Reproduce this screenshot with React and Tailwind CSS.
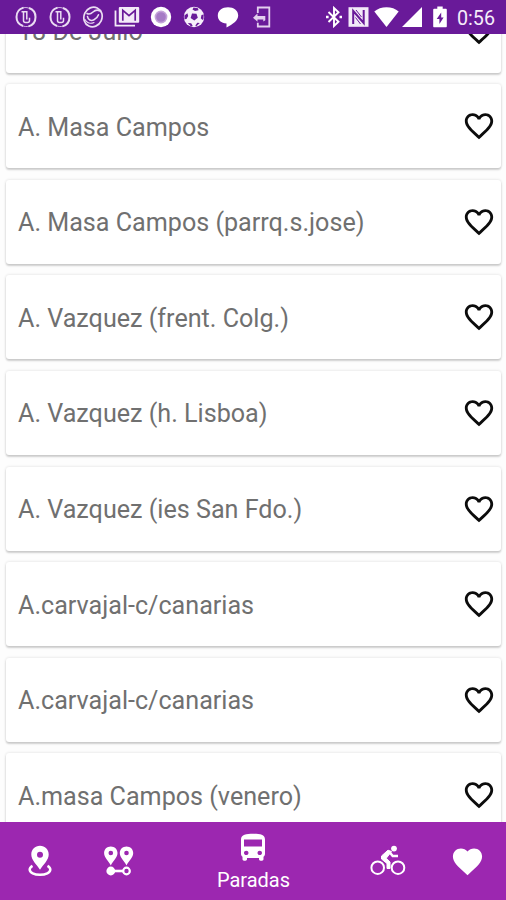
const STOPS = [
  "18 De Julio",
  "A. Masa Campos",
  "A. Masa Campos (parrq.s.jose)",
  "A. Vazquez (frent. Colg.)",
  "A. Vazquez (h. Lisboa)",
  "A. Vazquez (ies San Fdo.)",
  "A.carvajal-c/canarias",
  "A.carvajal-c/canarias",
  "A.masa Campos (venero)"
];

const HEART = "M12 21.35l-1.45-1.32C5.4 15.36 2 12.28 2 8.5 2 5.42 4.42 3 7.5 3c1.74 0 3.41.81 4.5 2.09C13.09 3.81 14.76 3 16.5 3 19.58 3 22 5.42 22 8.5c0 3.78-3.4 6.86-8.55 11.54L12 21.35z";
const HEART_BORDER = "M16.5 3c-1.74 0-3.41.81-4.5 2.09C10.91 3.81 9.24 3 7.5 3 4.42 3 2 5.42 2 8.5c0 3.78 3.4 6.86 8.55 11.54L12 21.35l1.45-1.32C18.6 15.36 22 12.28 22 8.5 22 5.42 19.58 3 16.5 3zm-4.4 15.55l-.1.1-.1-.1C7.14 14.24 4 11.39 4 8.5 4 6.5 5.5 5 7.5 5c1.54 0 3.04.99 3.57 2.36h1.87C13.46 5.99 14.96 5 16.5 5c2 0 3.5 1.5 3.5 3.5 0 2.89-3.14 5.74-7.9 10.05z";

function PhoneRing() {
  return (
    <svg viewBox="0 0 22 22" className="h-[22px] w-[22px]" fill="none" stroke="#eadcf2">
      <path d="M8.5 1.600C4.300 2.800 1.500 6.500 1.500 11s2.800 7.700 6.500 9M13.500 20.400c4.200-1.200 7-4.900 7-9.400S17.700 3.300 14 2" strokeWidth="2" />
      <path d="M7 2.200c2.500-1 5.500-.9 8 .4M7 19.600c2.500 1.100 5 1.200 7.500.5" strokeWidth=".8" />
      <path d="M6.500 5.800h5.300v7.700M8.500 6v8.500c0 1.300.7 2 2 2h2c1.300 0 2-.8 2-2v-2.700" strokeWidth="1.500" />
    </svg>
  );
}

function Swirl() {
  return (
    <svg viewBox="0 0 22 22" className="h-[22px] w-[22px]" fill="none" stroke="#eadcf2" strokeLinecap="round">
      <ellipse cx="11" cy="11" rx="9" ry="10" strokeWidth="1.7" transform="rotate(25 11 11)" />
      <path d="M5 7.500c1.800.9 4 .4 6-1.500 2-1.800 4.500-2.300 6.500-1.200" strokeWidth="1.600" />
      <path d="M5.500 10.500c.5 3.500 3.500 4.800 6.500 3.300 2.300-1.100 3.800-3 4.500-5" strokeWidth="1.600" />
      <path d="M3 13.500c2 3.500 5.500 4.500 9 3" strokeWidth="1.100" />
    </svg>
  );
}

function MailStack() {
  return (
    <svg viewBox="0 0 26 22" className="h-[22px] w-[26px]" fill="none" stroke="#f3eaf8">
      <path d="M1.500 4.500v15.200H21" strokeWidth="1.800" />
      <rect x="4.800" y="1" width="20.400" height="15.700" rx="1" fill="#f3eaf8" stroke="none" />
      <path d="M8.800 14.800V4.400l6.200 5.300 6.200-5.300v10.400" stroke="#691a99" strokeWidth="1.700" />
    </svg>
  );
}

function Record() {
  return (
    <svg viewBox="0 0 22 22" className="h-[22px] w-[22px]">
      <circle cx="11" cy="11" r="10.2" fill="#fff" />
      <circle cx="11" cy="11" r="6.400" fill="#c4a3da" />
      <circle cx="11" cy="11" r="4.800" fill="#a67bc6" />
    </svg>
  );
}

function Ball() {
  return (
    <svg viewBox="0 0 22 22" className="h-[22px] w-[22px]">
      <circle cx="11" cy="11" r="10.200" fill="#f6effa" />
      <g fill="#691a99">
        <path d="M9 7.500l4.500.3 1.300 4-3.500 2.700-3.700-2.500z" />
        <path d="M10.500 1.500l4.500.8.5 2-3.500.7-2.500-1.500z" />
        <path d="M1.400 9.500l3-2.200.8 2.700-1.700 3-2 .2zM20.700 8.500l-2.200.5-.7 3.200 1.700 1.800 1-1.300zM4.800 17l3.400.3 1.500 2.500-1.700.6zM16.800 17l-2.500-.3-2 2.800 1 .8z" />
      </g>
    </svg>
  );
}

function Bubble() {
  return (
    <svg viewBox="0 0 22 22" className="h-[22px] w-[22px]" fill="#fff">
      <path d="M11 1.200c5.800 0 10.200 3.300 10.200 8.200 0 5-5.400 8.800-11.700 12v-3.900C4.200 17.200.8 14 .8 9.400.8 4.500 5.200 1.200 11 1.200z" />
    </svg>
  );
}

function Exit() {
  return (
    <svg viewBox="0 0 20 22" className="h-[22px] w-[20px]" fill="none" stroke="#e3d0ee" strokeWidth="1.800">
      <path d="M5.800 7V1.500h11.500v19H5.800v-3.700" />
      <path d="M5.500 7.500v2.600h7.800v4.200l-2 1.200v-2H5.500v2.300L1 11.700z" fill="#e3d0ee" stroke="none" />
    </svg>
  );
}

function StatusBar() {
  return (
    <header className="flex h-[34px] shrink-0 items-center justify-between bg-[#691a99] pl-[9px] pr-[11px]">
      <div className="grid grid-cols-[repeat(8,33.700px)] justify-items-center">
        <PhoneRing />
        <PhoneRing />
        <Swirl />
        <MailStack />
        <Record />
        <Ball />
        <Bubble />
        <Exit />
      </div>
      <div className="flex items-center">
        <svg viewBox="0 0 18 22" className="mr-[5px] h-[22px] w-[18px]" fill="none" stroke="#fff" strokeWidth="1.900">
          <path d="M3.500 6l10 9.700L9 20V2l4.500 4.300-10 9.700" />
          <path d="M1 11h2.600M14.500 11H17" strokeWidth="2.400" />
        </svg>
        <svg viewBox="0 0 21 22" className="mr-[5px] h-[22px] w-[21px]">
          <path d="M.5 1.200h20v19.600H.5z" fill="#f3eaf8" />
          <path d="M5.200 18V5l10.500 12V4" fill="none" stroke="#691a99" strokeWidth="2" />
          <path d="M8 4l5.500 7M7.500 11.500l5 6.500" stroke="#691a99" strokeWidth="1" />
        </svg>
        <svg viewBox="0 0 25 20" className="mr-[3px] h-5 w-[25px]" fill="#fff">
          <path d="M12.500 20L.3 4.400C3.500 1.700 7.800.2 12.500.2s9 1.500 12.200 4.200z" />
        </svg>
        <svg viewBox="0 0 20 20" className="mr-[11px] h-5 w-5" fill="#fff">
          <path d="M20 0v20H0z" />
        </svg>
        <svg viewBox="0 0 14 22" className="mr-[10px] h-[22px] w-3.5">
          <path d="M4.300.5h5.400v2.300H13c.5 0 .8.400.8.900v16.500c0 .600-.4 1-.9 1H1.200c-.6 0-1-.4-1-1V3.700c0-.5.400-.9.900-.9h3.200z" fill="#fff" />
          <path d="M8.200 6.500L3.700 13h2.700v5l4.200-6.600H8.200z" fill="#691a99" />
        </svg>
        <span className="pt-[3px] text-[19.700px] leading-none text-[#f5edf9]">0:56</span>
      </div>
    </header>
  );
}

function StopCard({ name }) {
  return (
    <li className="flex h-[84px] shrink-0 items-center justify-between rounded-[3px] bg-white pl-3 pr-[5px] shadow-[0_0_3px_rgba(0,0,0,0.14),0_2px_2px_rgba(0,0,0,0.16)]">
      <span className="pt-[3px] text-[25.130px] leading-[30px] text-[#707070]">{name}</span>
      <svg viewBox="0 0 24 24" className="h-[34px] w-[34px] text-[#0c0c0c]" fill="currentColor">
        <path d={HEART_BORDER} />
      </svg>
    </li>
  );
}

function PinIcon() {
  return (
    <svg viewBox="0 0 24 32" className="h-8 w-6" fill="#fff">
      <path fillRule="evenodd" d="M12 .8c5 0 8.700 3.800 8.700 8.600 0 5.800-5.200 9.500-8.700 15.300-3.500-5.800-8.700-9.500-8.700-15.300C3.300 4.600 7 .8 12 .8zm0 5.900a3 3 0 1 0 0 6 3 3 0 0 0 0-6z" />
      <path d="M4.500 20.800C2.700 21.800 1.700 23 1.700 24.500c0 3.300 4.500 5.300 10.300 5.300s10.300-2 10.300-5.300c0-1.500-1-2.700-2.800-3.700" fill="none" stroke="#fff" strokeWidth="2.500" />
    </svg>
  );
}

function RouteIcon() {
  const pin = "M6.800.5c3.800 0 6.700 2.800 6.700 6.500 0 4.500-4.500 7.800-6.700 12.500C4.600 14.800.1 11.500.1 7 .1 3.300 3 .5 6.800.5zm0 4.200a2.300 2.300 0 1 0 0 4.600 2.300 2.300 0 0 0 0-4.600z";
  return (
    <svg viewBox="0 0 30 32" className="mt-0.5 h-8 w-[30px]" fill="#fff">
      <path d={pin} fillRule="evenodd" />
      <path d={pin} fillRule="evenodd" transform="translate(15.700 0)" />
      <circle cx="6.800" cy="25" r="4.400" />
      <path d="M8 23.700h12v2.600H8z" />
      <circle cx="22.500" cy="25" r="3.300" fill="none" stroke="#fff" strokeWidth="2.200" />
    </svg>
  );
}

function BusIcon() {
  return (
    <svg viewBox="0 0 24 24" className="h-[34px] w-[36px]" preserveAspectRatio="none" fill="#fff">
      <path d="M4 16c0 .88.39 1.67 1 2.220V20c0 .55.45 1 1 1h1c.55 0 1-.45 1-1v-1h8v1c0 .55.45 1 1 1h1c.55 0 1-.45 1-1v-1.780c.61-.55 1-1.340 1-2.220V6c0-3.500-3.580-4-8-4s-8 .5-8 4v10zm3.500 1c-.83 0-1.500-.67-1.500-1.500S6.670 14 7.500 14s1.500.67 1.500 1.500S8.330 17 7.500 17zm9 0c-.83 0-1.500-.67-1.500-1.500s.67-1.500 1.500-1.500 1.500.67 1.500 1.500-.67 1.500-1.500 1.500zm1.500-6H6V6h12v5z" />
    </svg>
  );
}

function BikeIcon() {
  return (
    <svg viewBox="0 0 36 32" className="ml-px h-8 w-9" fill="none" stroke="#fff">
      <circle cx="7.700" cy="22.700" r="6.300" strokeWidth="2" />
      <circle cx="28" cy="22.700" r="6.300" strokeWidth="2" />
      <circle cx="24" cy="3.600" r="2.900" fill="#fff" stroke="none" />
      <path d="M11.500 11l6.500-5.800 3.500 1.300-5.200 6.700 3.700 3.800v6.500h-3v-5l-5.500-4.500z" fill="#fff" strokeWidth="1" strokeLinejoin="round" />
      <path d="M19.500 7l3.200 4h5.300" strokeWidth="2.500" />
    </svg>
  );
}

function BottomNav() {
  return (
    <nav className="grid h-[78px] shrink-0 grid-cols-[79px_79px_190px_79px_79px] items-center justify-items-center bg-[#9c27b0] text-white">
      <PinIcon />
      <RouteIcon />
      <div className="flex flex-col items-center pl-px">
        <BusIcon />
        <span className="mt-1 text-[20px] leading-[22px]">Paradas</span>
      </div>
      <BikeIcon />
      <svg viewBox="0 0 24 24" className="ml-0.5 h-[35px] w-[35px]" fill="currentColor">
        <path d={HEART} />
      </svg>
    </nav>
  );
}

export default function App() {
  return (
    <div className="flex h-[900px] w-[506px] flex-col overflow-hidden bg-[#fdfdfd] font-['Roboto',sans-serif]">
      <StatusBar />
      <main className="min-h-0 flex-1 overflow-hidden">
        <ul className="-mt-[45.400px] flex flex-col gap-[11.600px] pl-1.5 pr-[5px]">
          {STOPS.map((name, i) => (
            <StopCard key={i} name={name} />
          ))}
        </ul>
      </main>
      <BottomNav />
    </div>
  );
}
